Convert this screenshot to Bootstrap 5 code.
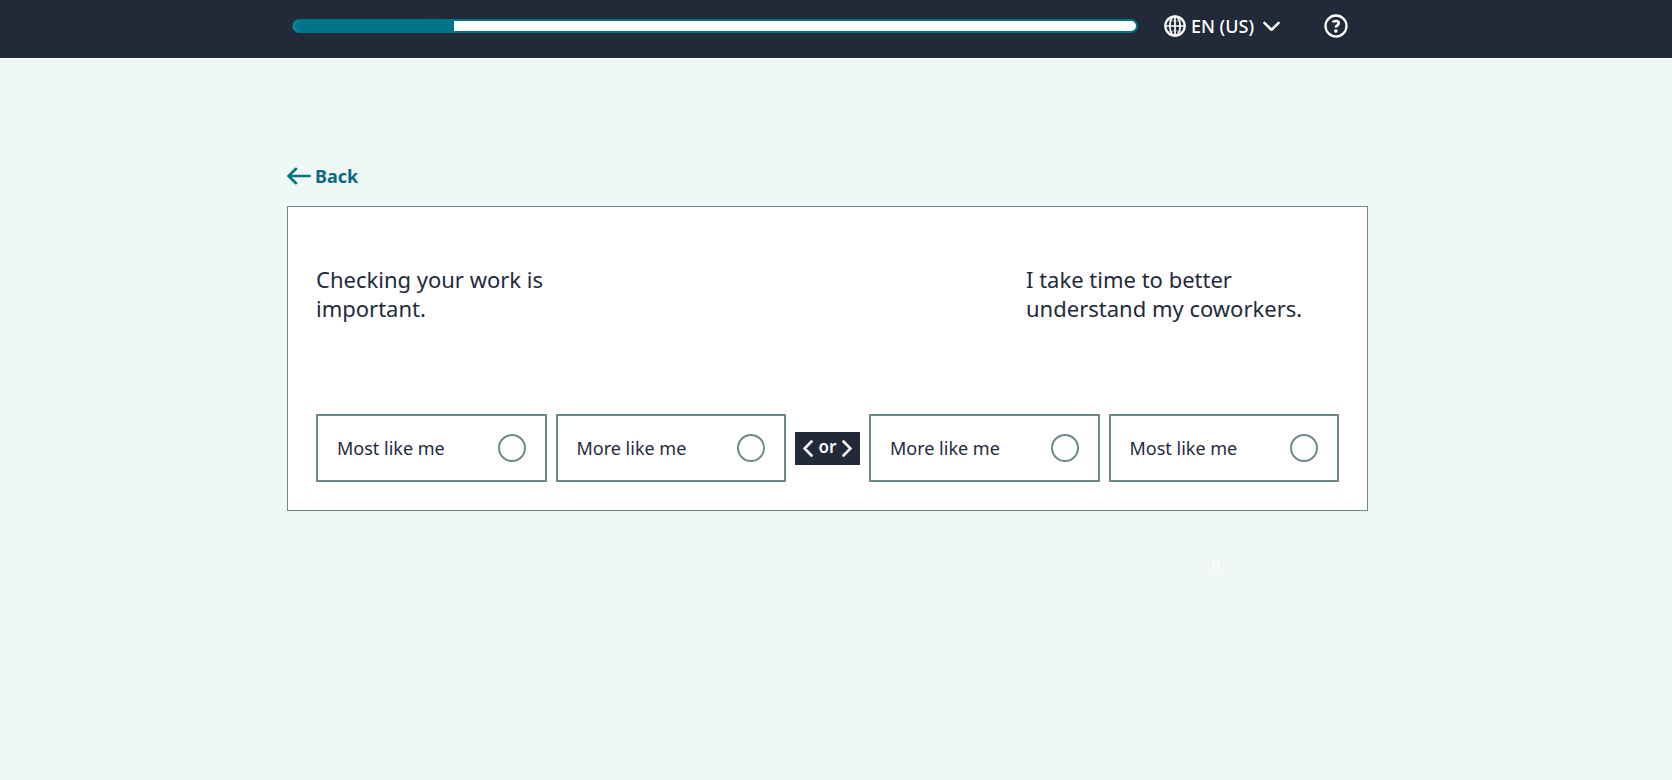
<!DOCTYPE html>
<html lang="en">
<head>
<meta charset="utf-8">
<meta name="viewport" content="width=device-width, initial-scale=1">
<title>Work style assessment</title>
<link href="https://cdn.jsdelivr.net/npm/bootstrap@5.3.0/dist/css/bootstrap.min.css" rel="stylesheet">
<style>
:root { --navy: #222938; --teal: #007587; --edge: #6b8a8a; --mist: #eff7f7; }
body { font-family: "Noto Sans", "Open Sans", sans-serif; background: var(--mist); color: #1f2a3d; padding-right: 17px; }
.top-bar { background: var(--navy); margin-right: -17px; padding-right: 17px; height: 59px; border-bottom: 1px solid #fff; padding-bottom: 6px; }
.page-width { width: 100%; max-width: 1081px; margin-inline: auto; }
.top-inner { padding-left: 5px; padding-right: 20px; }
.track { height: 14px; border: 2px solid var(--teal); border-radius: 7px; background: #fff; }
.track .progress-bar { background: var(--teal); }
.step-mark { width: 9px; height: 10px; border-left: 1px solid #086b7c; }
.top-btn { color: #fff; font-size: 18px; line-height: 24px; font-weight: 500; }
.lang-btn { margin-left: 26px; gap: 5px; }
.help-btn { margin-left: 44px; }
.back-link { color: #0b6b7d; font-size: 18px; line-height: 24px; font-weight: 700; gap: 4px; }
main { padding-top: 105px; }
.choice-card { border: 1px solid var(--edge); border-radius: 0; padding: 58px 28px 28px; margin-top: 15px; color: inherit; }
.statement { font-size: 22px; line-height: 29px; width: 313px; }
.statements { min-height: 149px; }
.option { flex: 1 1 0; height: 68px; border: 2px solid var(--edge); padding: 0 19px 0 19px; font-size: 18px; line-height: 24px; cursor: pointer; }
.option .form-check-input { width: 28px; height: 28px; margin: 0; border: 2px solid var(--edge); background-color: #fff; }
.options { gap: 9px; }
.or-tag { width: 65px; height: 33px; background: var(--navy); color: #fff; font-size: 17px; line-height: 24px; font-weight: 600; gap: 6px; }
.or-tag span { padding-bottom: 3px; }
.pause-mark { width: 6px; height: 13px; border: solid #fff; border-width: 0 1px; margin: 49px 149px 0 auto; }
</style>
</head>
<body>
<header class="top-bar d-flex align-items-center">
  <div class="page-width top-inner d-flex align-items-center">
    <div class="progress track flex-grow-1" role="progressbar" aria-label="Progress" aria-valuenow="19" aria-valuemin="0" aria-valuemax="100">
      <div class="progress-bar flex-row justify-content-end" style="width:19%"><i class="step-mark"></i><i class="step-mark me-2"></i></div>
    </div>
    <button type="button" class="btn p-0 border-0 top-btn lang-btn d-flex align-items-center">
      <svg width="22" height="22" viewBox="0 0 22 22" fill="none" stroke="#fff" stroke-width="1.7"><circle cx="11" cy="11" r="9.7" stroke-width="2.2"/><ellipse cx="11" cy="11" rx="5.2" ry="9.7"/><path d="M11 1v20M1 11h20"/><path d="M4 5q7 3 14 0M4 17q7-3 14 0" stroke-width="1" stroke-opacity=".55"/></svg>
      <span>EN (US)</span>
      <svg class="ms-1" width="17" height="11" viewBox="0 0 17 11" fill="none" stroke="#fff" stroke-width="2.5" stroke-linecap="round" stroke-linejoin="round"><path d="M1.4 1.8l7.1 7 7.1-7"/></svg>
    </button>
    <button type="button" class="btn p-0 border-0 help-btn d-flex" aria-label="Help">
      <svg width="24" height="24" viewBox="0 0 24 24" fill="none" stroke="#fff" stroke-width="2.3"><circle cx="12" cy="12" r="10.5"/><path d="M9 8.4Q9.4 7 12 7q2.7 0 2.7 2.2 0 1.3-1.4 2.2-1.4.8-1.4 2.2" stroke-width="2.7"/><circle cx="11.9" cy="17" r="1.8" fill="#fff" stroke="none"/></svg>
    </button>
  </div>
</header>

<main class="page-width">
  <a href="#" class="back-link d-inline-flex align-items-center text-decoration-none">
    <svg width="24" height="18" viewBox="0 0 24 18" fill="none" stroke="#007587" stroke-width="2.6" stroke-linecap="round" stroke-linejoin="round"><path d="M9 1.8L1.5 9 9 16.2M1.5 9h21"/></svg>
    <span>Back</span>
  </a>
  <form class="card choice-card">
    <div class="statements d-flex justify-content-between">
      <p class="statement mb-0">Checking your work is important.</p>
      <p class="statement mb-0">I take time to better understand my coworkers.</p>
    </div>
    <div class="options d-flex align-items-center">
      <label class="option d-flex align-items-center justify-content-between" for="o1">Most like me<input class="form-check-input" type="radio" name="answer" id="o1"></label>
      <label class="option d-flex align-items-center justify-content-between" for="o2">More like me<input class="form-check-input" type="radio" name="answer" id="o2"></label>
      <div class="or-tag d-flex align-items-center justify-content-center">
        <svg width="10" height="17" viewBox="0 0 10 17" fill="none" stroke="#fff" stroke-width="2.6" stroke-linecap="round"><path d="M8.5 1.5l-7 7 7 7"/></svg>
        <span>or</span>
        <svg width="10" height="17" viewBox="0 0 10 17" fill="none" stroke="#fff" stroke-width="2.6" stroke-linecap="round"><path d="M1.5 1.5l7 7-7 7"/></svg>
      </div>
      <label class="option d-flex align-items-center justify-content-between" for="o3">More like me<input class="form-check-input" type="radio" name="answer" id="o3"></label>
      <label class="option d-flex align-items-center justify-content-between" for="o4">Most like me<input class="form-check-input" type="radio" name="answer" id="o4"></label>
    </div>
  </form>
  <div class="pause-mark" aria-hidden="true"></div>
</main>
<script src="https://cdn.jsdelivr.net/npm/bootstrap@5.3.0/dist/js/bootstrap.bundle.min.js"></script>
</body>
</html>
